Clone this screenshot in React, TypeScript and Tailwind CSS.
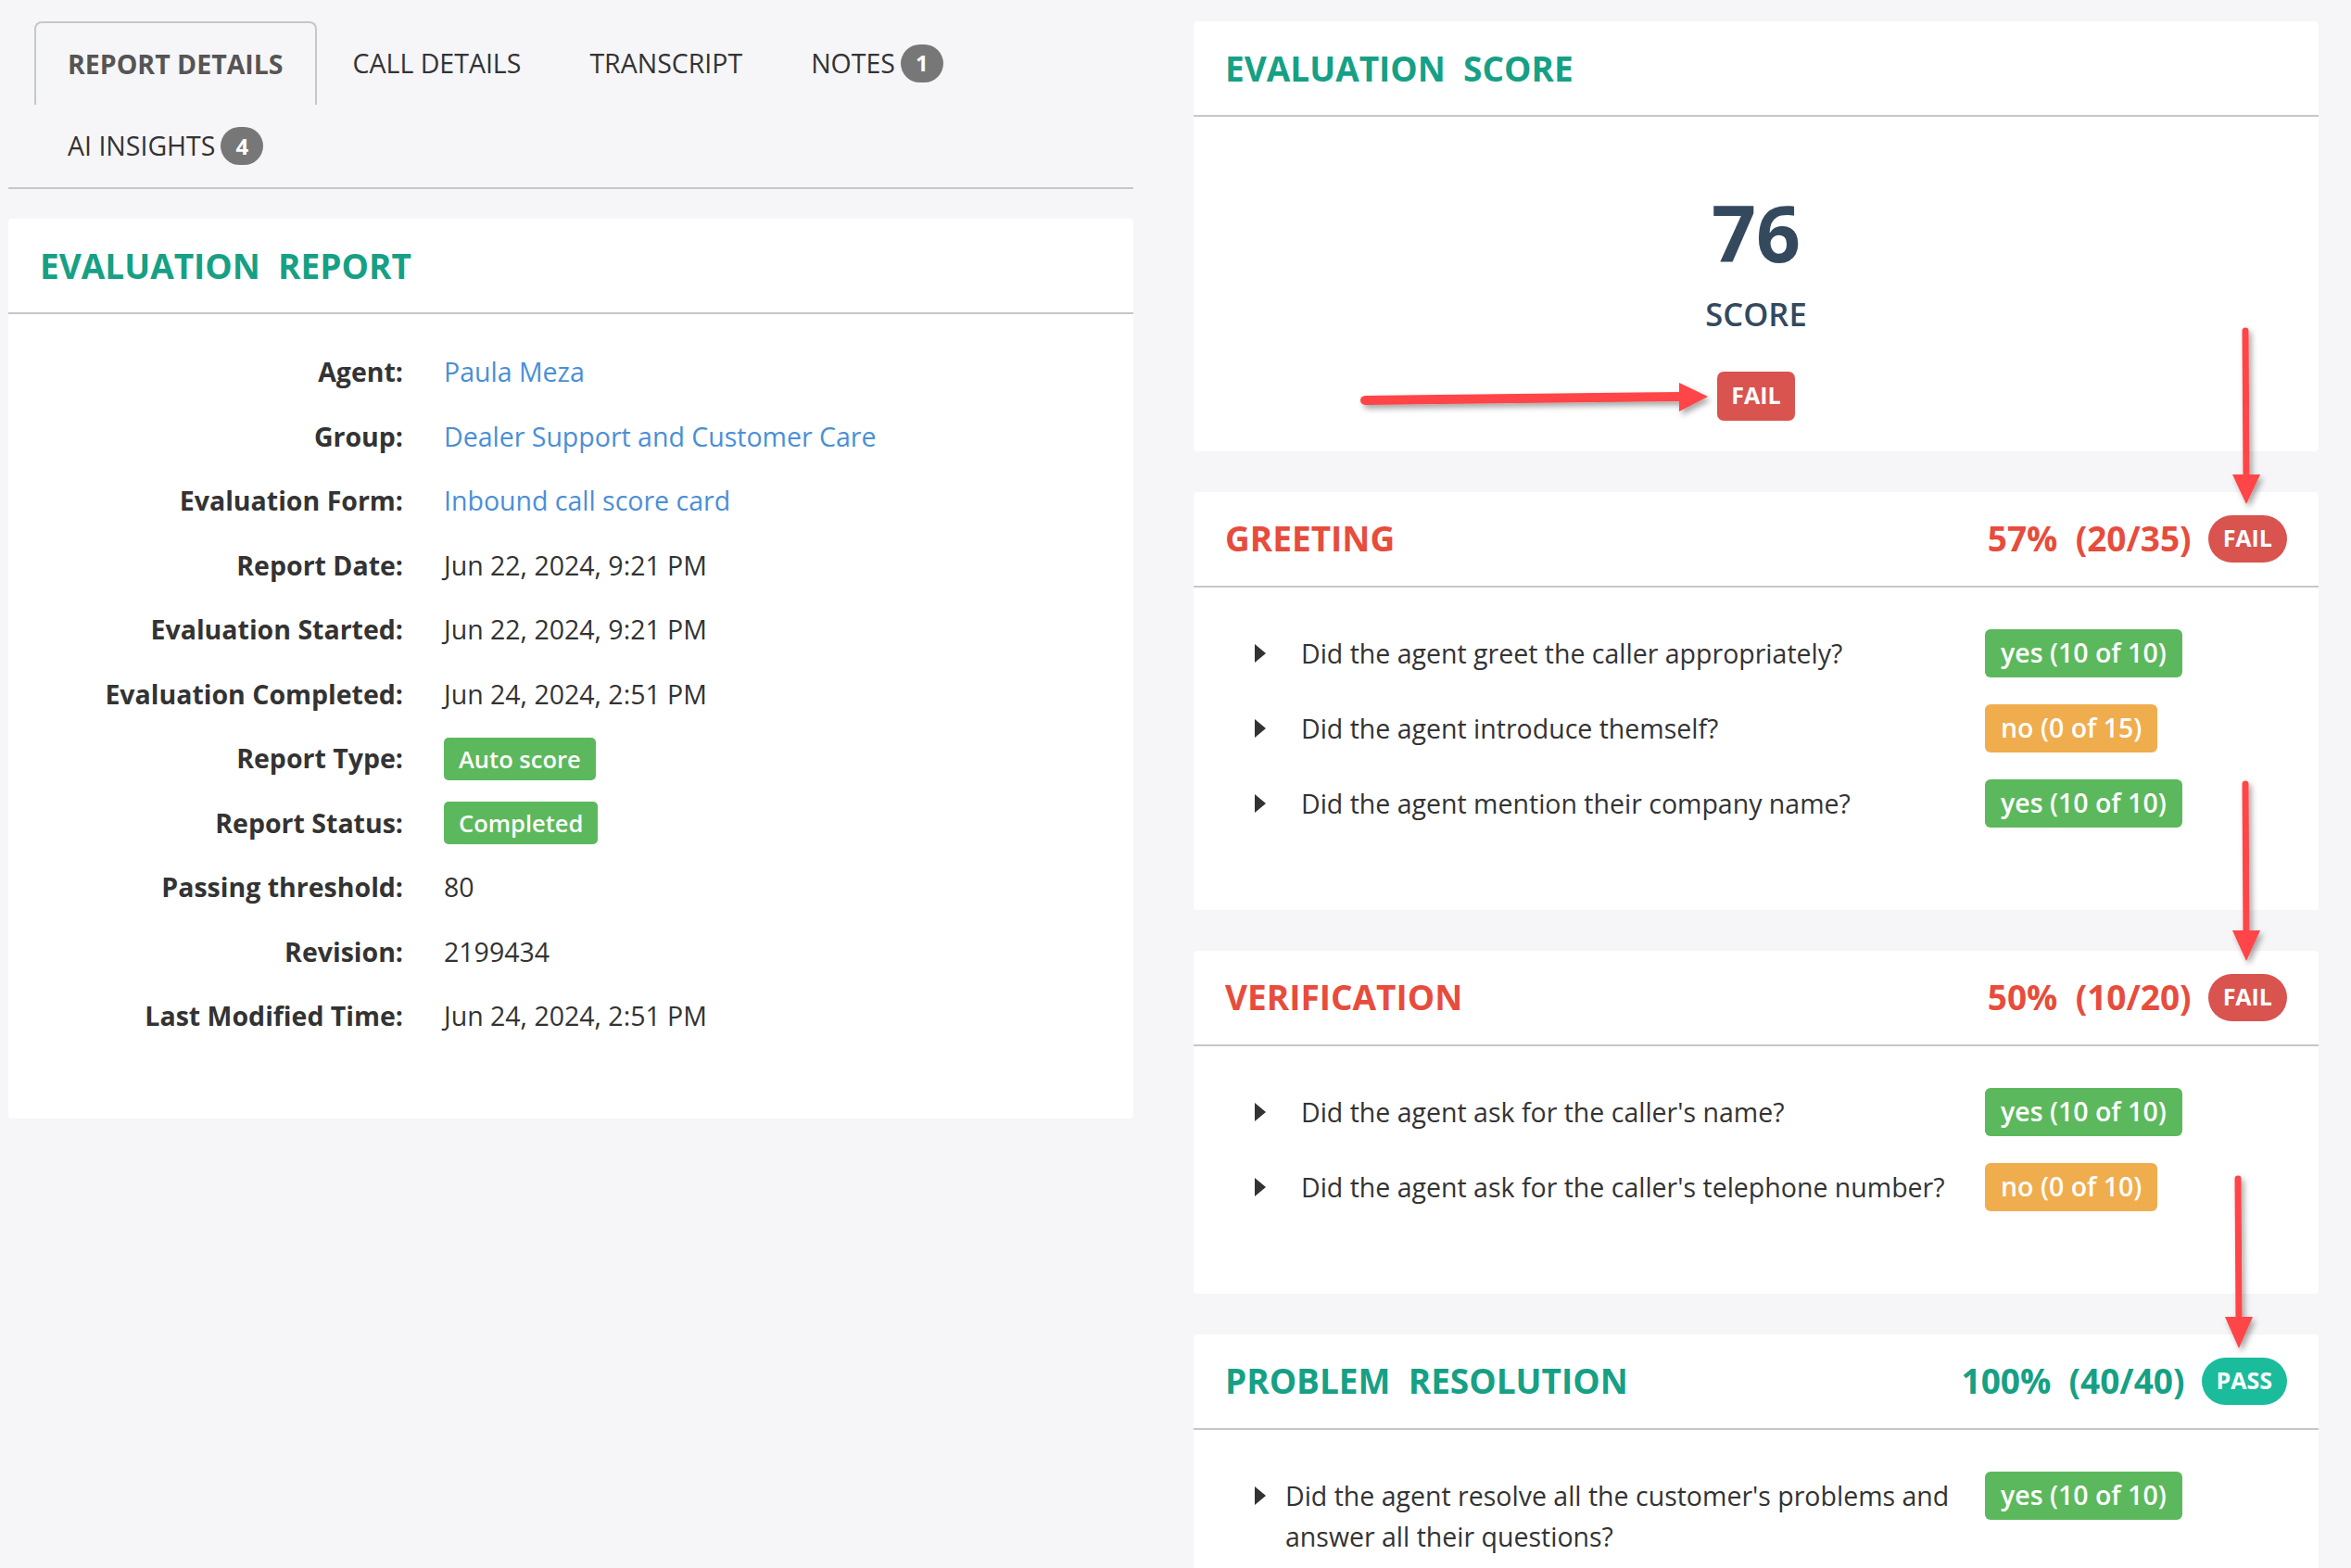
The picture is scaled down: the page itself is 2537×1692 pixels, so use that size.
import React from 'react';

type Question = { text: string; answer: string; ok: boolean; indent?: string };

const details: { label: string; value: string; kind?: 'link' | 'badge' }[] = [
  { label: 'Agent:', value: 'Paula Meza', kind: 'link' },
  { label: 'Group:', value: 'Dealer Support and Customer Care', kind: 'link' },
  { label: 'Evaluation Form:', value: 'Inbound call score card', kind: 'link' },
  { label: 'Report Date:', value: 'Jun 22, 2024, 9:21 PM' },
  { label: 'Evaluation Started:', value: 'Jun 22, 2024, 9:21 PM' },
  { label: 'Evaluation Completed:', value: 'Jun 24, 2024, 2:51 PM' },
  { label: 'Report Type:', value: 'Auto score', kind: 'badge' },
  { label: 'Report Status:', value: 'Completed', kind: 'badge' },
  { label: 'Passing threshold:', value: '80' },
  { label: 'Revision:', value: '2199434' },
  { label: 'Last Modified Time:', value: 'Jun 24, 2024, 2:51 PM' },
];

function Count({ n }: { n: number }) {
  return (
    <span className="ml-[6px] h-[41px] min-w-[46px] px-[12px] rounded-full bg-[#777] text-white font-bold text-[24px] flex items-center justify-center">
      {n}
    </span>
  );
}

function Tab({ label, count, active }: { label: string; count?: number; active?: boolean }) {
  return (
    <div
      className={
        active
          ? 'h-[90px] px-[34px] mr-[4px] flex items-center border-2 border-b-0 border-[#c4c8cc] rounded-t-[8px] font-bold text-[#555]'
          : 'h-[90px] px-[35px] mr-[4px] flex items-center text-[#333]'
      }
    >
      <span>{label}</span>
      {count !== undefined && <Count n={count} />}
    </div>
  );
}

function Section({
  title,
  score,
  pass,
  questions,
}: {
  title: string;
  score: string;
  pass: boolean;
  questions: Question[];
}) {
  const color = pass ? 'text-[#16a085]' : 'text-[#e74c3c]';
  return (
    <div className="bg-white rounded-[4px]">
      <div className="h-[103px] px-[34px] flex items-center justify-between border-b-2 border-[#c4c8cc]">
        <h2 className={`text-[37px] font-bold whitespace-pre ${color}`}>{title}</h2>
        <div className="flex items-center">
          <span className={`text-[37px] font-bold whitespace-pre ${color}`}>{score}</span>
          <span
            className={`ml-[18px] h-[51px] px-[16px] rounded-full text-white font-bold text-[25px] flex items-center ${
              pass ? 'bg-[#1abc9c]' : 'bg-[#d9534f]'
            }`}
          >
            {pass ? 'PASS' : 'FAIL'}
          </span>
        </div>
      </div>
      <div className="pl-[66px] pr-[100px] pt-[45px] pb-[89px] flex flex-col gap-[29px]">
        {questions.map((q) => (
          <div key={q.text} className="flex items-start">
            <div className="h-[52px] w-[12px] flex items-center">
              <span className="w-0 h-0 border-l-[12px] border-l-[#333] border-y-[10px] border-y-transparent" />
            </div>
            <div className={`flex-1 pt-[4px] pr-[32px] leading-[44px] text-[28.5px] text-[#333] ${q.indent ?? 'pl-[38px]'}`}>
              {q.text}
            </div>
            <div className="w-[260px]">
              <span
                className={`inline-flex h-[52px] items-center px-[17px] rounded-[6px] text-white text-[28.5px] font-semibold ${
                  q.ok ? 'bg-[#5cb85c]' : 'bg-[#f0ad4e]'
                }`}
              >
                {q.answer}
              </span>
            </div>
          </div>
        ))}
      </div>
    </div>
  );
}

function Arrows() {
  return (
    <svg className="absolute top-0 left-0 pointer-events-none" width="2537" height="1692" viewBox="0 0 2537 1692">
      <defs>
        <filter id="sh" x="-20%" y="-20%" width="140%" height="140%">
          <feDropShadow dx="3" dy="4" stdDeviation="3" floodColor="#000" floodOpacity="0.35" />
        </filter>
      </defs>
      <g filter="url(#sh)" fill="#ff4446" stroke="#ff4446">
        <line x1="1473" y1="432" x2="1816" y2="428" strokeWidth="10" strokeLinecap="round" />
        <polygon points="1812,413 1843,428 1812,444" stroke="none" />

        <line x1="2423" y1="357" x2="2424" y2="516" strokeWidth="7" strokeLinecap="round" />
        <polygon points="2409,512 2424,544 2439,512" stroke="none" />

        <line x1="2423" y1="846" x2="2424" y2="1008" strokeWidth="7" strokeLinecap="round" />
        <polygon points="2409,1004 2424,1037 2439,1004" stroke="none" />

        <line x1="2415" y1="1272" x2="2416" y2="1425" strokeWidth="7" strokeLinecap="round" />
        <polygon points="2401,1421 2416,1455 2431,1421" stroke="none" />
      </g>
    </svg>
  );
}

export default function App() {
  return (
    <div className="relative h-[1692px] overflow-hidden bg-[#f6f6f8] font-['Open_Sans',sans-serif] text-[28.5px] text-[#333]">
      <div className="flex gap-[65px] pl-[9px]">
        {/* left column */}
        <div className="w-[1214px]">
          <div className="pt-[23px] pl-[28px] border-b-2 border-[#c4c8cc]">
            <div className="flex">
              <Tab label="REPORT DETAILS" active />
              <Tab label="CALL DETAILS" />
              <Tab label="TRANSCRIPT" />
              <Tab label="NOTES" count={1} />
            </div>
            <div className="flex h-[89px]">
              <div className="flex items-center px-[36px]">
                <span>AI INSIGHTS</span>
                <Count n={4} />
              </div>
            </div>
          </div>

          <div className="mt-[32px] bg-white rounded-[4px]">
            <div className="h-[103px] px-[34px] flex items-center border-b-2 border-[#c4c8cc]">
              <h2 className="text-[37px] font-bold text-[#16a085] whitespace-pre">EVALUATION  REPORT</h2>
            </div>
            <div className="pt-[28px] pb-[75px]">
              {details.map((d) => (
                <div key={d.label} className="grid grid-cols-[426px_1fr] gap-x-[44px] h-[69.5px] items-center">
                  <div className="text-right font-bold text-[#333]">{d.label}</div>
                  <div>
                    {d.kind === 'link' ? (
                      <span className="text-[#4a8fd6]">{d.value}</span>
                    ) : d.kind === 'badge' ? (
                      <span className="inline-flex h-[46px] items-center px-[16px] rounded-[5px] bg-[#5cb85c] text-white text-[25.5px] font-semibold">
                        {d.value}
                      </span>
                    ) : (
                      <span>{d.value}</span>
                    )}
                  </div>
                </div>
              ))}
            </div>
          </div>
        </div>

        {/* right column */}
        <div className="w-[1214px] pt-[23px] flex flex-col gap-[44px]">
          <div className="bg-white rounded-[4px]">
            <div className="h-[103px] px-[34px] flex items-center border-b-2 border-[#c4c8cc]">
              <h2 className="text-[37px] font-bold text-[#16a085] whitespace-pre">EVALUATION  SCORE</h2>
            </div>
            <div className="pt-[83px] pb-[33px] flex flex-col items-center text-[#34495e]">
              <div className="text-[84px] leading-none font-bold">76</div>
              <div className="mt-[29px] text-[34.5px] leading-none font-semibold">SCORE</div>
              <span className="mt-[44px] h-[53px] px-[15px] rounded-[7px] bg-[#d9534f] text-white text-[25px] font-bold flex items-center">
                FAIL
              </span>
            </div>
          </div>

          <Section
            title="GREETING"
            score="57%  (20/35)"
            pass={false}
            questions={[
              { text: 'Did the agent greet the caller appropriately?', answer: 'yes (10 of 10)', ok: true },
              { text: 'Did the agent introduce themself?', answer: 'no (0 of 15)', ok: false },
              { text: 'Did the agent mention their company name?', answer: 'yes (10 of 10)', ok: true },
            ]}
          />

          <Section
            title="VERIFICATION"
            score="50%  (10/20)"
            pass={false}
            questions={[
              { text: "Did the agent ask for the caller's name?", answer: 'yes (10 of 10)', ok: true },
              { text: "Did the agent ask for the caller's telephone number?", answer: 'no (0 of 10)', ok: false },
            ]}
          />

          <Section
            title="PROBLEM  RESOLUTION"
            score="100%  (40/40)"
            pass={true}
            questions={[
              {
                text: "Did the agent resolve all the customer's problems and answer all their questions?",
                answer: 'yes (10 of 10)',
                ok: true,
                indent: 'pl-[21px]',
              },
            ]}
          />
        </div>
      </div>
      <Arrows />
    </div>
  );
}
